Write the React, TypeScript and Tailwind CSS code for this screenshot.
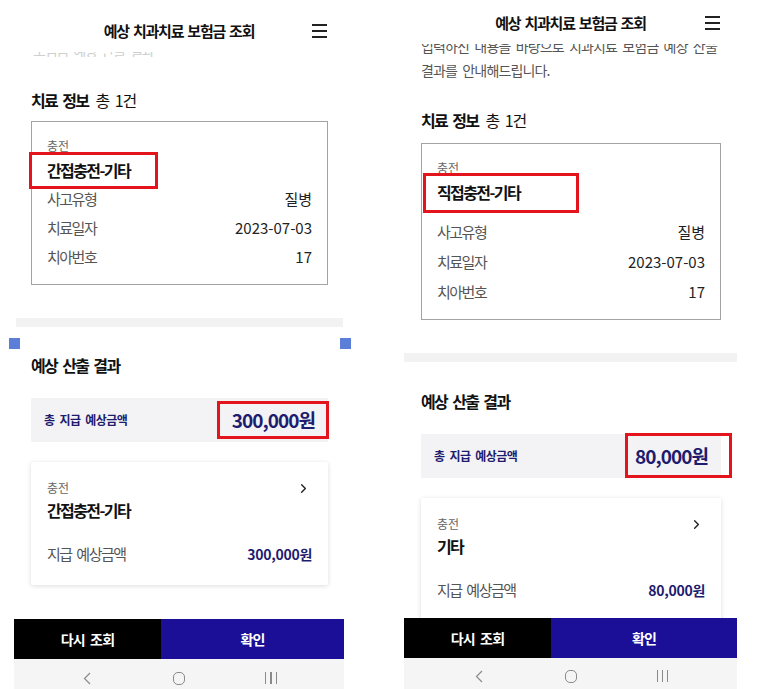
import { ChevronRight } from "lucide-react";

function Hamburger() {
  return (
    <div className="flex w-[15px] flex-col gap-[4px] justify-self-end">
      <div className="h-[2px] bg-[#222]" />
      <div className="h-[2px] bg-[#222]" />
      <div className="h-[2px] bg-[#222]" />
    </div>
  );
}

function Header({ className }: { className: string }) {
  return (
    <div className={className}>
      <div />
      <div className="text-[15px] leading-[20px] font-bold tracking-[-0.08em] text-[#111] [word-spacing:0.12em]">
        예상 치과치료 보험금 조회
      </div>
      <Hamburger />
    </div>
  );
}

function SectionTitle({ className, count }: { className: string; count?: boolean }) {
  return (
    <div className={className}>
      <span className="font-bold tracking-[-0.1em]">{count ? "치료 정보" : "예상 산출 결과"}</span>
      {count && <span className="ml-[7px] tracking-[-0.06em]">총 1건</span>}
    </div>
  );
}

function Row({ label, value }: { label: string; value: string }) {
  return (
    <div className="flex items-center justify-between leading-[20px]">
      <span className="text-[15px] tracking-[-0.1em] text-[#555]">{label}</span>
      <span className="text-[15px] text-[#222]">{value}</span>
    </div>
  );
}

function InfoCard({ title, box, rows }: { title: string; box: string; rows: string }) {
  return (
    <div className="relative mr-[16px] ml-[17px] border border-[#a3a3a3] px-[15px] pt-[16px] pb-[17px]">
      <div className="text-[12px] leading-[16px] text-[#666]">충전</div>
      <div className="mt-[4px] text-[16px] leading-[24px] font-bold tracking-[-0.1em] text-[#111]">
        {title}
      </div>
      <div className={rows}>
        <Row label="사고유형" value="질병" />
        <Row label="치료일자" value="2023-07-03" />
        <Row label="치아번호" value="17" />
      </div>
      <div className={box} />
    </div>
  );
}

function AmountBox({ amount, box }: { amount: string; box: string }) {
  return (
    <div className="relative mt-[21px] mr-[16px] ml-[17px] flex h-[44px] items-center justify-between bg-[#f3f3f5] px-[13px]">
      <span className="text-[12px] font-bold tracking-[-0.05em] text-[#1e1c6e]">총 지급 예상금액</span>
      <span className="text-[19px] font-semibold tracking-[-0.05em] text-[#1e1c6e]">{amount}</span>
      <div className={box} />
    </div>
  );
}

function ResultCard({ title, amount }: { title: string; amount: string }) {
  return (
    <div className="mt-[20px] mr-[16px] ml-[17px] rounded-[2px] bg-white px-[16px] pt-[18px] pb-[21px] shadow-[0_1px_5px_rgba(0,0,0,0.14)]">
      <div className="flex items-center justify-between">
        <span className="text-[12px] leading-[16px] text-[#666]">충전</span>
        <ChevronRight className="mr-[1px] h-[15px] w-[15px] text-[#222]" strokeWidth={2.2} />
      </div>
      <div className="mt-[2px] text-[16px] leading-[24px] font-bold tracking-[-0.1em] text-[#111]">
        {title}
      </div>
      <div className="mt-[22px] flex items-center justify-between leading-[20px]">
        <span className="text-[15px] tracking-[-0.1em] text-[#555]">지급 예상금액</span>
        <span className="text-[14px] font-bold tracking-[-0.02em] text-[#1e1c6e]">{amount}</span>
      </div>
    </div>
  );
}

function BottomBar({ nav }: { nav: string }) {
  return (
    <div className="absolute inset-x-0 bottom-0">
      <div className="flex h-[40px] text-[14px] font-bold tracking-[-0.06em] text-white">
        <div className="flex w-[147px] items-center justify-center bg-black">다시 조회</div>
        <div className="flex flex-1 items-center justify-center bg-[#1a0f96]">확인</div>
      </div>
      <div className={nav}>
        <div className="flex w-[92px] justify-center">
          <svg width="8" height="13" viewBox="0 0 8 13" fill="none">
            <path d="M7 1L1.5 6.5L7 12" stroke="#8a8a8a" strokeWidth="1.2" />
          </svg>
        </div>
        <div className="flex w-[92px] justify-center">
          <div className="h-[13px] w-[12px] rounded-[5px] border-[1.3px] border-[#8a8a8a]" />
        </div>
        <div className="flex w-[92px] justify-center gap-[4px]">
          <div className="h-[12px] w-[1.3px] bg-[#8a8a8a]" />
          <div className="h-[12px] w-[1.3px] bg-[#8a8a8a]" />
          <div className="h-[12px] w-[1.3px] bg-[#8a8a8a]" />
        </div>
      </div>
    </div>
  );
}

export default function App() {
  return (
    <div className="flex h-[689px] gap-[60px] overflow-hidden bg-white pl-[14px] font-['Noto_Sans_CJK_KR','Noto_Sans',sans-serif] text-[#111] [word-spacing:0.18em]">
      {/* left screen */}
      <div className="relative h-[689px] w-[330px]">
        <Header className="grid h-[48px] grid-cols-[1fr_auto_1fr] items-center px-[17px] pt-[14px]" />
        <div className="mt-[4px] h-[5px] overflow-hidden px-[19px]">
          <div className="-mt-[12px] text-[14px] leading-[20px] tracking-[-0.08em] text-[#cfcfcf]">
            보험금 예상 산출 결과
          </div>
        </div>
        <SectionTitle count className="mt-[31px] ml-[17px] text-[16px] leading-[24px]" />
        <div className="mt-[9px]">
          <InfoCard
            title="간접충전-기타"
            rows="mt-[7px] flex flex-col gap-[9px]"
            box="absolute top-[30px] -left-[3px] h-[37px] w-[129px] border-[3px] border-[#e3141b]"
          />
        </div>
        <div className="mt-[33px] mr-[1px] ml-[2px] h-[9px] bg-[#f2f2f2]" />
        <SectionTitle className="mt-[26px] ml-[17px] text-[16px] leading-[24px]" />
        <AmountBox
          amount="300,000원"
          box="absolute top-[3px] left-[186px] h-[38px] w-[112px] border-[3px] border-[#e3141b]"
        />
        <ResultCard title="간접충전-기타" amount="300,000원" />
        <div className="absolute top-[338px] -left-[5px] h-[11px] w-[11px] bg-[#5b7fd9]" />
        <div className="absolute top-[338px] left-[326px] h-[11px] w-[11px] bg-[#5b7fd9]" />
        <BottomBar nav="flex h-[30px] justify-center bg-[#f5f5f5] pt-[13px]" />
      </div>

      {/* right screen */}
      <div className="relative h-[689px] w-[333px] overflow-hidden">
        <Header className="grid h-[40px] grid-cols-[1fr_auto_1fr] items-center px-[17px] pt-[6px]" />
        <div className="mt-[4px] h-[38px] overflow-hidden pl-[17px]">
          <div className="-mt-[10px] text-[14px] leading-[24px] tracking-[-0.06em] text-[#555]">
            <div>입력하신 내용을 바탕으로 치과치료 보험금 예상 산출</div>
            <div>결과를 안내해드립니다.</div>
          </div>
        </div>
        <SectionTitle count className="mt-[26px] ml-[17px] text-[16px] leading-[24px]" />
        <div className="mt-[11px]">
          <InfoCard
            title="직접충전-기타"
            rows="mt-[18px] flex flex-col gap-[10px]"
            box="absolute top-[29px] left-[1px] h-[40px] w-[156px] border-[3px] border-[#e3141b]"
          />
        </div>
        <div className="mt-[33px] h-[9px] bg-[#f2f2f2]" />
        <SectionTitle className="mt-[27px] ml-[17px] text-[16px] leading-[24px]" />
        <AmountBox
          amount="80,000원"
          box="absolute -top-[1px] left-[204px] h-[45px] w-[107px] border-[3px] border-[#e3141b]"
        />
        <ResultCard title="기타" amount="80,000원" />
        <BottomBar nav="flex h-[31px] justify-center bg-[#f5f5f5] pt-[12px]" />
      </div>
    </div>
  );
}
